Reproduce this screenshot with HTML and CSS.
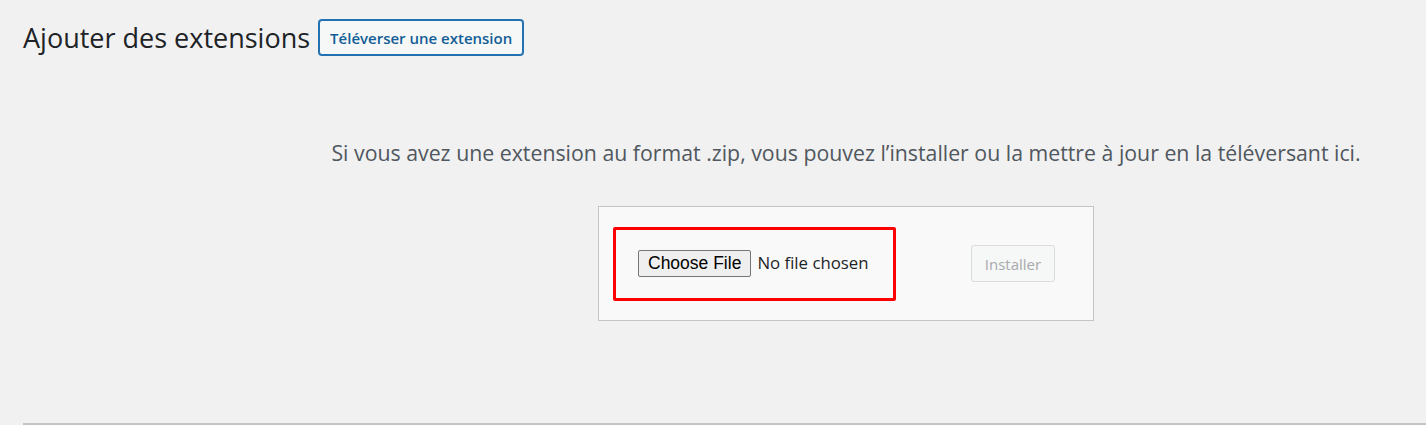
FILE: index.html
```html
<!DOCTYPE html>
<html lang="fr">
<head>
<meta charset="utf-8">
<title>Ajouter des extensions</title>
<link rel="stylesheet" href="styles.css">
</head>
<body>
<div class="wrap">
  <div class="page-header">
    <h1 class="page-title">Ajouter des extensions</h1>
    <a class="title-action" href="#">Téléverser une extension</a>
  </div>
  <div class="upload-plugin">
    <p class="install-help">Si vous avez une extension au format .zip, vous pouvez l’installer ou la mettre à jour en la téléversant ici.</p>
    <form class="upload-form">
      <input class="file-input" type="file" name="pluginzip">
      <button class="install-button" type="button" disabled>Installer</button>
      <span class="annotation"></span>
    </form>
  </div>
  <div class="list-top"></div>
</div>
</body>
</html>
```
FILE: styles.css
```css
html, body {
  margin: 0;
  background: #f1f1f1;
}
body {
  font-family: "Open Sans", "Noto Sans", sans-serif;
  color: #1d2327;
  overflow: hidden;
}
.wrap {
  padding: 20px 0 0 23px;
}
.page-header {
  display: flex;
  align-items: center;
  gap: 9px;
  height: 35px;
}
.page-title {
  margin: 0;
  font-size: 27px;
  font-weight: 400;
  line-height: 35px;
}
.title-action {
  display: flex;
  align-items: center;
  box-sizing: border-box;
  height: 35px;
  padding: 0 10px;
  font-size: 15px;
  font-weight: 600;
  color: #135e96;
  text-decoration: none;
  background: #f6f7f7;
  border: 1px solid #2271b1;
  border-radius: 3px;
  box-shadow: 0 0 0 1px #2271b1;
}
.upload-plugin {
  margin-left: 243px;
  text-align: center;
}
.install-help {
  margin: 0;
  padding-top: 82px;
  font-size: 21.3px;
  line-height: 32px;
  color: #50575e;
}
.upload-form {
  position: relative;
  display: inline-flex;
  justify-content: space-between;
  align-items: center;
  box-sizing: border-box;
  width: 496px;
  margin-top: 37px;
  padding: 38px 38px 38px 39px;
  background: #f9f9f9;
  border: 1px solid #c3c4c7;
  vertical-align: top;
}
.file-input {
  font-family: "Open Sans", "Noto Sans", sans-serif;
  font-size: 16.8px;
  color: #1d2327;
}
.file-input::file-selector-button {
  font-family: "Liberation Sans", Arial, sans-serif;
  font-size: 17.5px;
  height: 27px;
  padding: 0 9px;
  margin-right: 6px;
  color: #000;
  background: #efefef;
  border: 1px solid #767676;
  border-radius: 2px;
}
.install-button {
  box-sizing: border-box;
  height: 37px;
  width: 84px;
  padding: 0;
  font-family: "Open Sans", "Noto Sans", sans-serif;
  font-size: 15px;
  color: #a7aaad;
  background: #f6f7f7;
  border: 1px solid #dcdcde;
  border-radius: 3px;
}
.annotation {
  position: absolute;
  left: 14px;
  top: 20px;
  width: 283px;
  height: 74px;
  box-sizing: border-box;
  border: 3px solid #ff0000;
  border-radius: 2px;
  pointer-events: none;
}
.list-top {
  margin-top: 102px;
  border-top: 2px solid #c3c4c7;
}
```
